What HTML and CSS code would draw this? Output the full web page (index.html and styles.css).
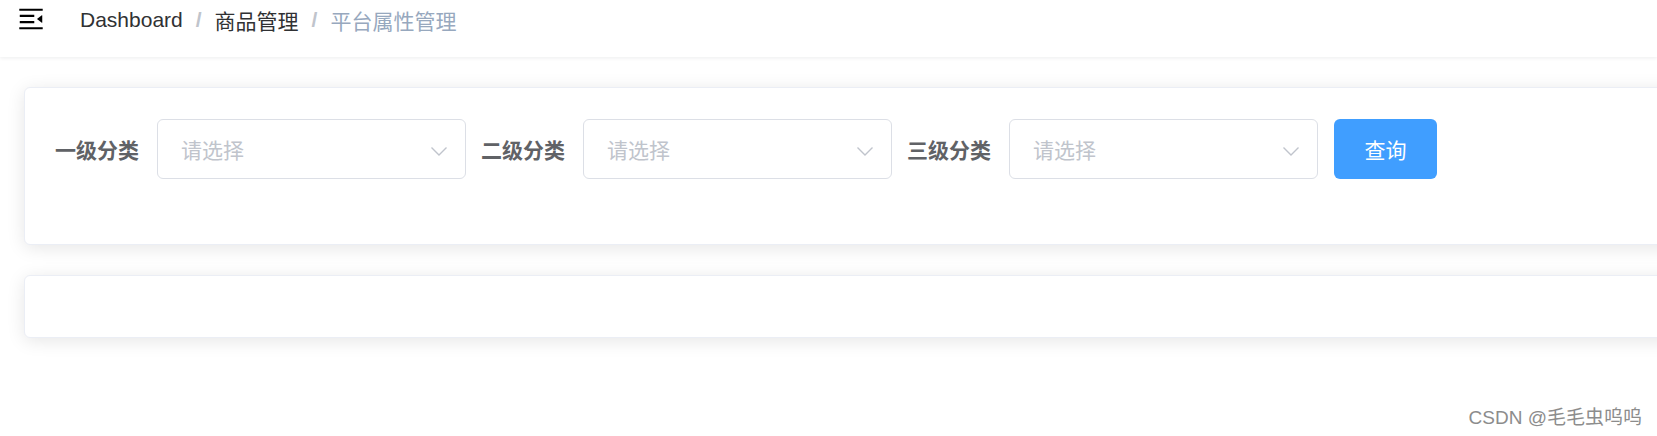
FILE: index.html
```html
<!DOCTYPE html>
<html>
<head>
    <title>平台属性管理</title>
    <link rel="stylesheet" href="styles.css">
</head>
<body>
    <div class="app">
        <div class="navbar">
            <div class="hamburger">
                <svg viewBox="0 0 1024 1024" width="30" height="30">
                    <path fill="#000" d="M408 442h480c4.4 0 8-3.6 8-8v-56c0-4.4-3.6-8-8-8H408c-4.4 0-8 3.6-8 8v56c0 4.4 3.6 8 8 8zm-8 204c0 4.4 3.6 8 8 8h480c4.4 0 8-3.6 8-8v-56c0-4.4-3.6-8-8-8H408c-4.4 0-8 3.6-8 8v56zm504-486H120c-4.4 0-8 3.6-8 8v56c0 4.4 3.6 8 8 8h784c4.4 0 8-3.6 8-8v-56c0-4.4-3.6-8-8-8zm0 632H120c-4.4 0-8 3.6-8 8v56c0 4.4 3.6 8 8 8h784c4.4 0 8-3.6 8-8v-56c0-4.4-3.6-8-8-8zM142.4 642.1L298.7 519a8.840 8.840 0 0 0 0-13.900L142.4 381.9c-5.8-4.6-14.4-.5-14.4 6.9v246.3a8.900 8.900 0 0 0 14.4 7z"/>
                </svg>
            </div>
            <div class="breadcrumb">
                <span class="crumb">Dashboard</span>
                <span class="sep">/</span>
                <span class="crumb">商品管理</span>
                <span class="sep">/</span>
                <span class="crumb current">平台属性管理</span>
            </div>
        </div>

        <div class="app-main">
            <div class="card">
                <div class="filter-form">
                    <div class="form-item">
                        <label class="form-label">一级分类</label>
                        <div class="select">
                            <span class="placeholder">请选择</span>
                            <svg class="arrow" viewBox="0 0 16 9" width="16" height="9"><polyline points="0.5,0.5 8,8 15.5,0.5" fill="none" stroke="#c0c4cc" stroke-width="1.4"/></svg>
                        </div>
                    </div>
                    <div class="form-item">
                        <label class="form-label">二级分类</label>
                        <div class="select">
                            <span class="placeholder">请选择</span>
                            <svg class="arrow" viewBox="0 0 16 9" width="16" height="9"><polyline points="0.5,0.5 8,8 15.5,0.5" fill="none" stroke="#c0c4cc" stroke-width="1.4"/></svg>
                        </div>
                    </div>
                    <div class="form-item">
                        <label class="form-label">三级分类</label>
                        <div class="select">
                            <span class="placeholder">请选择</span>
                            <svg class="arrow" viewBox="0 0 16 9" width="16" height="9"><polyline points="0.5,0.5 8,8 15.5,0.5" fill="none" stroke="#c0c4cc" stroke-width="1.4"/></svg>
                        </div>
                    </div>
                    <div class="form-item">
                        <button class="btn-primary">查询</button>
                    </div>
                </div>
            </div>

            <div class="card card-empty"></div>
        </div>

        <div class="watermark">CSDN @毛毛虫呜呜</div>
    </div>
</body>
</html>
```

FILE: styles.css
```css
html, body {
    margin: 0;
    padding: 0;
    background: #fff;
    overflow: hidden;
}

body {
    font-family: 'Liberation Sans', 'Noto Sans CJK SC', sans-serif;
    width: 1657px;
    height: 436px;
}

.app {
    position: relative;
    height: 436px;
}

/* top bar */
.navbar {
    height: 57px;
    display: flex;
    align-items: flex-start;
    background: #fff;
    box-shadow: 0 1px 4px rgba(0, 21, 41, 0.08);
    position: relative;
    z-index: 2;
}

.hamburger {
    width: 30px;
    height: 30px;
    margin: 4px 0 0 16px;
}

.hamburger svg {
    display: block;
    transform: rotate(180deg);
}

.breadcrumb {
    display: flex;
    align-items: center;
    height: 38px;
    margin: 1px 0 0 34px;
    font-size: 21px;
}

.crumb {
    color: #303133;
}

.crumb.current {
    color: #97a8be;
}

.sep {
    color: #c0c4cc;
    font-weight: bold;
    margin: 0 13px;
}

/* main */
.app-main {
    width: 1760px;
    padding: 30px 24px;
    box-sizing: border-box;
}

.card {
    background: #fff;
    border: 1px solid #ebeef5;
    border-radius: 6px;
    box-shadow: 0 3px 18px 0 rgba(0, 0, 0, 0.1);
    padding: 31px 30px 30px;
    margin-bottom: 30px;
}

.card-empty {
    height: 0;
    padding: 30px 30px 31px;
}

.filter-form {
    display: flex;
    align-items: flex-start;
}

.form-item {
    display: flex;
    align-items: center;
    margin-right: 15px;
    margin-bottom: 35px;
}

.form-label {
    font-family: 'Noto Sans CJK SC', sans-serif;
    font-size: 21px;
    font-weight: bold;
    color: #606266;
    line-height: 60px;
    height: 60px;
    padding-right: 18px;
}

.select {
    width: 309px;
    height: 60px;
    box-sizing: border-box;
    border: 1px solid #dcdfe6;
    border-radius: 6px;
    display: flex;
    align-items: center;
    justify-content: space-between;
    padding: 0 18px 0 23px;
}

.placeholder {
    font-family: 'Noto Sans CJK SC', sans-serif;
    font-size: 21px;
    color: #c0c4cc;
}

.arrow {
    display: block;
    margin-top: 4px;
}

.btn-primary {
    width: 103px;
    height: 60px;
    border: none;
    border-radius: 6px;
    background: #409eff;
    color: #fff;
    font-family: 'Noto Sans CJK SC', sans-serif;
    font-size: 21px;
    padding: 0;
    margin-left: 1px;
}

.watermark {
    position: absolute;
    right: 15px;
    bottom: 7px;
    font-size: 19px;
    color: #8c8c8c;
    text-shadow: 0 0 2px #fff;
}
```
